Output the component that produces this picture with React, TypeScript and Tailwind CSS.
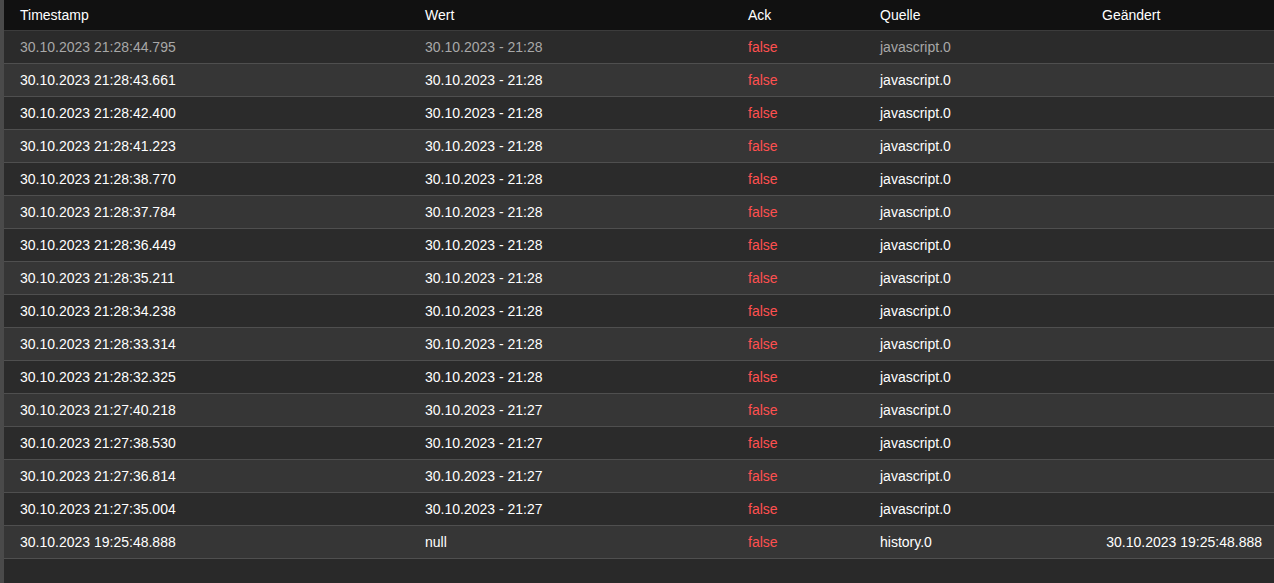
import React from "react";

const rows: [string, string, string, string?][] = [
  ["30.10.2023 21:28:44.795", "30.10.2023 - 21:28", "javascript.0"],
  ["30.10.2023 21:28:43.661", "30.10.2023 - 21:28", "javascript.0"],
  ["30.10.2023 21:28:42.400", "30.10.2023 - 21:28", "javascript.0"],
  ["30.10.2023 21:28:41.223", "30.10.2023 - 21:28", "javascript.0"],
  ["30.10.2023 21:28:38.770", "30.10.2023 - 21:28", "javascript.0"],
  ["30.10.2023 21:28:37.784", "30.10.2023 - 21:28", "javascript.0"],
  ["30.10.2023 21:28:36.449", "30.10.2023 - 21:28", "javascript.0"],
  ["30.10.2023 21:28:35.211", "30.10.2023 - 21:28", "javascript.0"],
  ["30.10.2023 21:28:34.238", "30.10.2023 - 21:28", "javascript.0"],
  ["30.10.2023 21:28:33.314", "30.10.2023 - 21:28", "javascript.0"],
  ["30.10.2023 21:28:32.325", "30.10.2023 - 21:28", "javascript.0"],
  ["30.10.2023 21:27:40.218", "30.10.2023 - 21:27", "javascript.0"],
  ["30.10.2023 21:27:38.530", "30.10.2023 - 21:27", "javascript.0"],
  ["30.10.2023 21:27:36.814", "30.10.2023 - 21:27", "javascript.0"],
  ["30.10.2023 21:27:35.004", "30.10.2023 - 21:27", "javascript.0"],
  ["30.10.2023 19:25:48.888", "null", "history.0", "30.10.2023 19:25:48.888"],
];

export default function App() {
  return (
    <div className="flex h-[583px] w-[1274px] bg-[#292929] text-[14px]" style={{ fontFamily: '"Liberation Sans", Arial, sans-serif' }}>
      <div className="w-[4px] shrink-0 bg-[#4a4a4a]" />
      <div className="flex-1">
        <div className="flex h-[31px] items-center bg-[#111111] border-b border-[#3c3c3c] text-white">
          <div className="w-[421px] pl-[16px]">Timestamp</div>
          <div className="w-[323px]">Wert</div>
          <div className="w-[132px]">Ack</div>
          <div className="w-[222px]">Quelle</div>
          <div>Geändert</div>
        </div>
        {rows.map((r, i) => (
          <div
            key={i}
            className={`flex h-[33px] items-center border-b border-[#4f4f4f] ${i % 2 === 0 ? "bg-[#2b2b2b]" : "bg-[#363636]"} ${i === 0 ? "text-[#a8a8a8]" : "text-white"}`}
          >
            <div className="w-[421px] pl-[16px]">{r[0]}</div>
            <div className="w-[323px]">{r[1]}</div>
            <div className="w-[132px] text-[#ff5050]">false</div>
            <div className="w-[222px]">{r[2]}</div>
            <div className="flex-1 pr-[12px] text-right">{r[3] ?? ""}</div>
          </div>
        ))}
      </div>
    </div>
  );
}
